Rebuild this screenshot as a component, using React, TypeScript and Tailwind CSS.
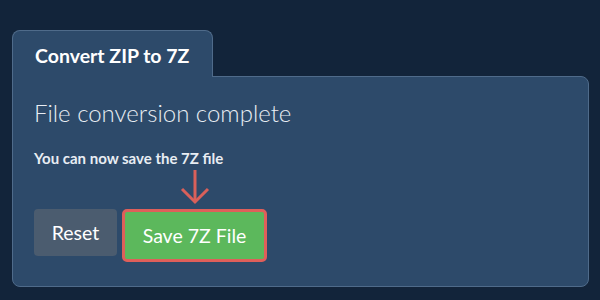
export default function App() {
  return (
    <div className="w-[600px] h-[300px] bg-[#12243a] pt-[30px] px-[12px] font-['Lato','Liberation_Sans',sans-serif]">
      <div className="relative z-10 -mb-px w-[201px] h-[47px] bg-[#2d4a6a] border border-b-0 border-[#4f6b8a] rounded-t-lg pl-[22px] pt-[14px]">
        <span className="text-[19.5px] font-bold text-white leading-none">Convert ZIP to 7Z</span>
      </div>
      <div className="w-[577px] h-[211px] bg-[#2d4a6a] border border-[#4f6b8a] rounded-b-lg rounded-tr-lg px-[21px] pt-[24px]">
        <h2 className="text-[24px] font-light text-[#e8edf3] leading-none">File conversion complete</h2>
        <p className="mt-[26px] text-[15px] font-bold text-[#e8edf3] leading-none">You can now save the 7Z file</p>
        <div className="mt-[43px] flex items-start gap-[5px]">
          <button className="w-[83px] h-[47px] rounded bg-[#4b5c6f] text-white text-[19.5px]">Reset</button>
          <div className="relative">
            <svg className="absolute left-1/2 -translate-x-1/2 bottom-full mb-[4px]" width="30" height="36" viewBox="0 0 30 36" fill="none" stroke="#d9605a" strokeWidth="3">
              <path d="M15 1 V33" />
              <path d="M2 20 L15 33 L28 20" />
            </svg>
            <button className="w-[145px] h-[53px] rounded-[5px] border-[3px] border-[#df5f5a] bg-[#5cb85c] text-white text-[19.5px]">Save 7Z File</button>
          </div>
        </div>
      </div>
    </div>
  );
}
